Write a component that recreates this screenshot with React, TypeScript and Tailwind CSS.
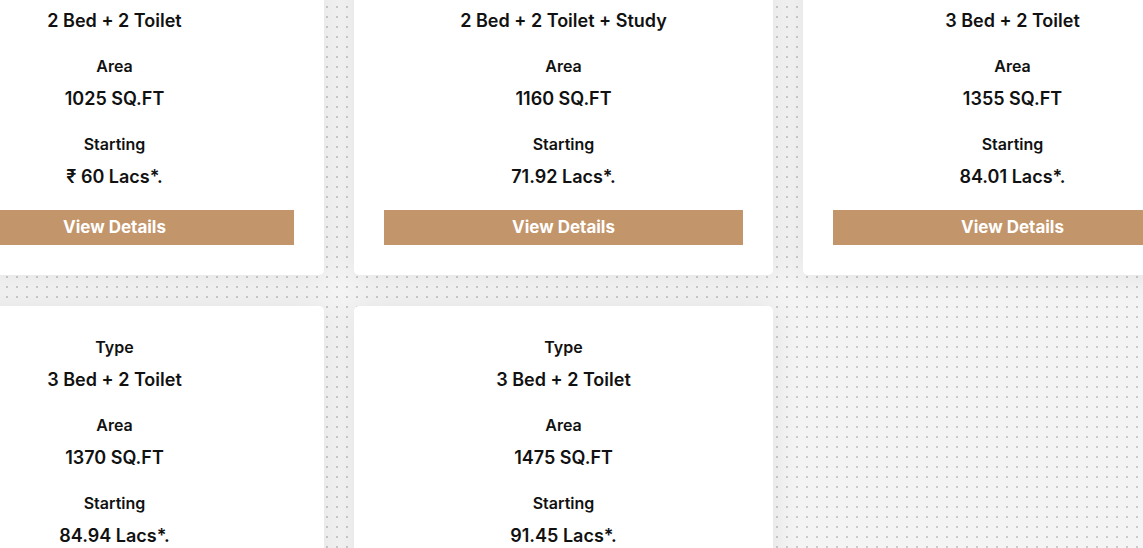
const plans = [
  { type: "2 Bed + 2 Toilet", area: "1025 SQ.FT", price: "₹ 60 Lacs*." },
  { type: "2 Bed + 2 Toilet + Study", area: "1160 SQ.FT", price: "71.92 Lacs*." },
  { type: "3 Bed + 2 Toilet", area: "1355 SQ.FT", price: "84.01 Lacs*." },
  { type: "3 Bed + 2 Toilet", area: "1370 SQ.FT", price: "84.94 Lacs*." },
  { type: "3 Bed + 2 Toilet", area: "1475 SQ.FT", price: "91.45 Lacs*." },
];

const Row: React.FC<{ label: string; value: string; last?: boolean }> = ({ label, value, last }) => (
  <div className={last ? "" : "mb-[21px]"}>
    <div className="text-[16px] leading-[22px] font-semibold text-[#111]">{label}</div>
    <div className="mt-2 text-[18px] leading-[27px] font-semibold text-[#111]">{value}</div>
  </div>
);

export default function App() {
  return (
    <div
      className="w-[1143px] h-[548px] overflow-hidden bg-[#f4f4f4] bg-[radial-gradient(circle,#cacaca_1px,transparent_1.4px)] bg-[length:10px_10px] bg-[position:2px_2px]"
      style={{ fontFamily: "Inter, 'Noto Sans', sans-serif" }}
    >
      <div className="w-[1317px] -ml-[95px] -mt-[53px] grid grid-cols-3 gap-x-[30px] gap-y-[31px]">
        {plans.map((p, i) => (
          <div
            key={i}
            className="bg-white rounded-[5px] shadow-[0_0_30px_rgba(0,0,0,0.08)] px-[30px] pt-[30px] pb-[30px] text-center"
          >
            <Row label="Type" value={p.type} />
            <Row label="Area" value={p.area} />
            <Row label="Starting" value={p.price} last />
            <button className="mt-[20px] w-full h-[35px] bg-[#c3956a] text-white text-[17px] font-bold">
              View Details
            </button>
          </div>
        ))}
      </div>
    </div>
  );
}
